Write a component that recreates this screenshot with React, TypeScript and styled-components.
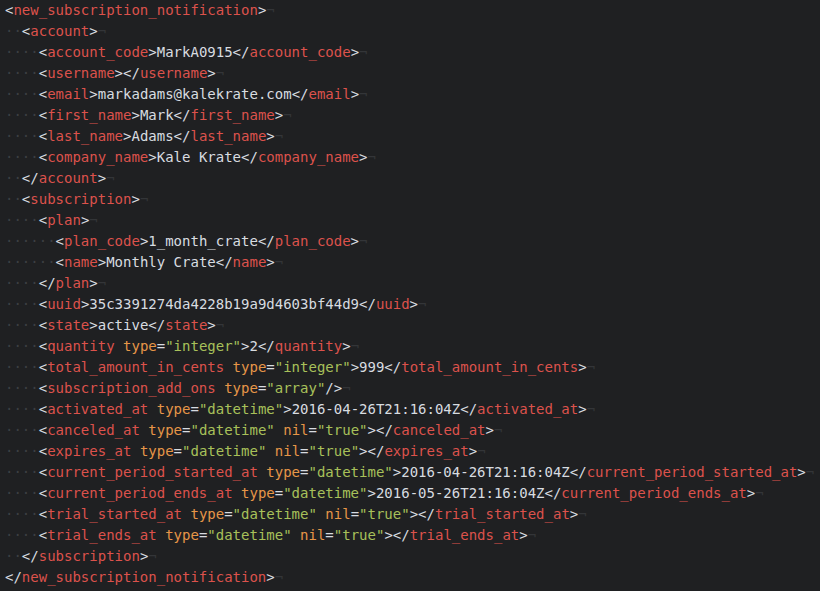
import React from "react";
import styled, { createGlobalStyle } from "styled-components";

const Global = createGlobalStyle`
  html, body {
    margin: 0;
    padding: 0;
    background: #1f2022;
  }
  body {
    width: 820px;
    height: 591px;
    overflow: hidden;
  }
`;

const Editor = styled.div`
  width: 820px;
  height: 591px;
  box-sizing: border-box;
  padding: 0 0 0 5px;
  background: #1f2022;
  overflow: hidden;
  font-family: "DejaVu Sans Mono", "Liberation Mono", monospace;
  font-size: 14px;
  line-height: 21px;
  color: #d5d9dd;
`;

const Line = styled.div`
  display: flex;
  white-space: pre;
  height: 21px;
`;

type Kind = "punct" | "tag" | "attr" | "value" | "text" | "ws" | "eol";

const colors: Record<Kind, string> = {
  punct: "#d8dce0",
  tag: "#dc524c",
  attr: "#e69648",
  value: "#a8c05a",
  text: "#d8dce0",
  ws: "#3c3f42",
  eol: "#333538",
};

const Tok = styled.span<{ $kind: Kind }>`
  color: ${(p) => colors[p.$kind]};
`;

const source = `<new_subscription_notification>
  <account>
    <account_code>MarkA0915</account_code>
    <username></username>
    <email>markadams@kalekrate.com</email>
    <first_name>Mark</first_name>
    <last_name>Adams</last_name>
    <company_name>Kale Krate</company_name>
  </account>
  <subscription>
    <plan>
      <plan_code>1_month_crate</plan_code>
      <name>Monthly Crate</name>
    </plan>
    <uuid>35c3391274da4228b19a9d4603bf44d9</uuid>
    <state>active</state>
    <quantity type="integer">2</quantity>
    <total_amount_in_cents type="integer">999</total_amount_in_cents>
    <subscription_add_ons type="array"/>
    <activated_at type="datetime">2016-04-26T21:16:04Z</activated_at>
    <canceled_at type="datetime" nil="true"></canceled_at>
    <expires_at type="datetime" nil="true"></expires_at>
    <current_period_started_at type="datetime">2016-04-26T21:16:04Z</current_period_started_at>
    <current_period_ends_at type="datetime">2016-05-26T21:16:04Z</current_period_ends_at>
    <trial_started_at type="datetime" nil="true"></trial_started_at>
    <trial_ends_at type="datetime" nil="true"></trial_ends_at>
  </subscription>
</new_subscription_notification>`;

type Token = { kind: Kind; text: string };

function tokenize(line: string): Token[] {
  const out: Token[] = [];
  const indent = line.length - line.trimStart().length;
  if (indent > 0) out.push({ kind: "ws", text: "·".repeat(indent) });
  const rest = line.slice(indent);
  const re = /(<\/?)(\w+)|(\s)(\w+)(=)("[^"]*")|(\/?>)|([^<>]+)/g;
  let m: RegExpExecArray | null;
  while ((m = re.exec(rest))) {
    if (m[1] !== undefined) {
      out.push({ kind: "punct", text: m[1] });
      out.push({ kind: "tag", text: m[2] });
    } else if (m[4] !== undefined) {
      out.push({ kind: "text", text: m[3] });
      out.push({ kind: "attr", text: m[4] });
      out.push({ kind: "punct", text: m[5] });
      out.push({ kind: "value", text: m[6] });
    } else if (m[7] !== undefined) {
      out.push({ kind: "punct", text: m[7] });
    } else if (m[8] !== undefined) {
      out.push({ kind: "text", text: m[8] });
    }
  }
  out.push({ kind: "eol", text: "¬" });
  return out;
}

export default function App() {
  const lines = source.split("\n");
  return (
    <>
      <Global />
      <Editor>
        {lines.map((l, i) => (
          <Line key={i}>
            {tokenize(l).map((t, j) => (
              <Tok key={j} $kind={t.kind}>
                {t.text}
              </Tok>
            ))}
          </Line>
        ))}
      </Editor>
    </>
  );
}
